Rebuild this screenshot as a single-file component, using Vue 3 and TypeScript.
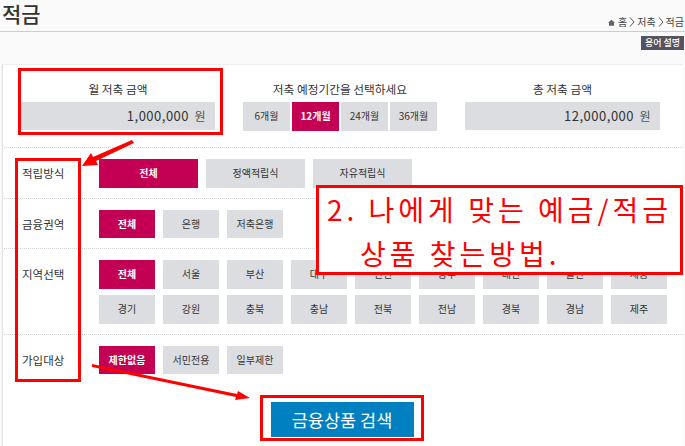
<script setup lang="ts">
const periods = ['6개월', '12개월', '24개월', '36개월']
const methods = ['전체', '정액적립식', '자유적립식']
const areas = ['전체', '은행', '저축은행']
const regions = [
  '전체', '서울', '부산', '대구', '인천', '광주', '대전', '울산', '세종',
  '경기', '강원', '충북', '충남', '전북', '전남', '경북', '경남', '제주',
]
const targets = ['제한없음', '서민전용', '일부제한']
const crumbs = ['홈', '저축', '적금']
</script>

<template>
  <div class="page">
    <header class="head">
      <h1>적금</h1>
      <nav class="crumb">
        <svg class="home" viewBox="0 0 10 10" width="7" height="7">
          <path d="M5 1 L10 5.4 H8.6 V9.5 H1.4 V5.4 H0 Z" fill="#666" />
        </svg>
        <template v-for="(c, i) in crumbs" :key="c">
          <svg v-if="i > 0" class="chev" viewBox="0 0 6 10" width="6" height="10">
            <path d="M1 .5 L5 5 L1 9.5" stroke="#555" stroke-width="1" fill="none" />
          </svg>
          <span>{{ c }}</span>
        </template>
      </nav>
    </header>

    <div class="tools"><button class="term">용어 설명</button></div>

    <section class="card">
      <div class="summary">
        <div class="sum sum-left">
          <p>월 저축 금액</p>
          <div class="amount">1,000,000 <em>원</em></div>
        </div>
        <div class="sum sum-mid">
          <p>저축 예정기간을 선택하세요</p>
          <div class="periods">
            <button v-for="(p, i) in periods" :key="p" class="opt" :class="{ on: i === 1 }">{{ p }}</button>
          </div>
        </div>
        <div class="sum sum-right">
          <p>총 저축 금액</p>
          <div class="amount">12,000,000 <em>원</em></div>
        </div>
      </div>

      <div class="row">
        <div class="label">적립방식</div>
        <div class="opts">
          <button v-for="(m, i) in methods" :key="m" class="opt wide" :class="{ on: i === 0 }">{{ m }}</button>
        </div>
      </div>
      <div class="row">
        <div class="label">금융권역</div>
        <div class="opts">
          <button v-for="(a, i) in areas" :key="a" class="opt" :class="{ on: i === 0 }">{{ a }}</button>
        </div>
      </div>
      <div class="row">
        <div class="label">지역선택</div>
        <div class="opts grid">
          <button v-for="(r, i) in regions" :key="r" class="opt" :class="{ on: i === 0 }">{{ r }}</button>
        </div>
      </div>
      <div class="row last">
        <div class="label">가입대상</div>
        <div class="opts">
          <button v-for="(t, i) in targets" :key="t" class="opt" :class="{ on: i === 0 }">{{ t }}</button>
        </div>
      </div>

      <div class="actions"><button class="search">금융상품 검색</button></div>
    </section>

    <!-- 빨간 주석 표시 -->
    <div class="mark mark-amount"></div>
    <div class="mark mark-labels"></div>
    <div class="mark mark-search"></div>
    <div class="note">
      <div>2. 나에게 맞는 예금/적금</div>
      <div class="note-2">상품 찾는방법.</div>
    </div>
    <svg class="arrows" width="685" height="446" viewBox="0 0 685 446">
      <path d="M132 140 L134 143 L96 161 L98 165 L82 166 L91 153 L93 157 Z" fill="#f00" />
      <path d="M92 364 L92 367 L236 397 L235 400 L250 398 L238 391 L237 394 Z" fill="#f00" />
    </svg>
  </div>
</template>

<style scoped>
.page { position: relative; width: 685px; height: 446px; overflow: hidden; background: #fafafa; color: #333; font-family: "Noto Sans CJK KR", "Noto Sans", sans-serif; }
.head { height: 32px; box-sizing: border-box; display: flex; justify-content: space-between; align-items: flex-end; border-bottom: 1px solid #ccc; padding: 0 1px 0 2px; }
h1 { margin: 0; font-size: 21px; line-height: 25px; padding-top: 1px; font-weight: 500; color: #333; align-self: flex-start; }
.crumb { display: flex; align-items: center; gap: 2px; font-size: 10px; line-height: 14px; padding-bottom: 2px; color: #444; }
.home { margin-right: 1px; }
.tools { height: 32px; display: flex; justify-content: flex-end; padding: 4px 1px 0 0; box-sizing: border-box; }
.term { width: 43px; height: 14px; padding: 0; border: 0; background: #55535f; color: #fff; font: 500 9px/14px "Noto Sans CJK KR", sans-serif; }
.card { margin-left: 2px; width: 681px; height: 382px; background: #fff; border-left: 1px solid #ddd; border-top: 1px solid #eee; box-sizing: border-box; }
.summary { display: flex; height: 83px; border-bottom: 1px dotted #d4d4d4; box-sizing: border-box; padding-top: 13px; margin-left: 1px; }
.sum p { margin: 0 0 2px; height: 22px; font-size: 11.7px; line-height: 22px; text-align: center; color: #333; }
.sum-left { width: 194px; margin-left: 17px; }
.sum-mid { width: 194px; margin-left: 28px; }
.sum-right { width: 195px; margin-left: 28px; }
.amount { height: 28px; background: #dcdde1; text-align: right; padding-right: 9px; font-size: 13px; line-height: 28px; color: #333; letter-spacing: .5px; }
.amount em { font-style: normal; font-size: 12px; color: #555; margin-left: 2px; }
.periods { display: flex; gap: 2px; }
.periods .opt { width: 47px; }
.row { display: flex; padding: 11px 0 10px; border-bottom: 1px dotted #d4d4d4; margin-left: 1px; }
.row.last { border-bottom: 0; }
.label { width: 95px; padding-left: 18px; box-sizing: border-box; font-size: 11.5px; line-height: 28px; color: #333; flex: none; }
.opts { display: flex; gap: 8px; }
.grid { display: grid; grid-template-columns: repeat(9, 56px); gap: 6.5px 8px; }
.opt { width: 56px; height: 28.5px; padding: 0; border: 0; background: #dcdde1; color: #333; font: 400 10px/28px "Noto Sans CJK KR", sans-serif; }
.opt.wide { width: 99px; }
.opt.on { background: #c40054; color: #fff; font-weight: 700; }
.actions { display: flex; justify-content: center; padding-top: 17.5px; margin-left: -2px; }
.search { width: 143px; height: 35px; padding: 0; border: 0; background: #0080c0; color: #fff; font: 400 17.5px/35px "Noto Sans CJK KR", sans-serif; }
.mark { position: absolute; border: 3px solid #f00; box-sizing: border-box; }
.mark-amount { left: 18px; top: 68px; width: 205px; height: 67px; }
.mark-labels { left: 15px; top: 158px; width: 66px; height: 224px; }
.mark-search { left: 260px; top: 395px; width: 164px; height: 46px; }
.note { position: absolute; left: 316px; top: 185px; width: 367px; height: 90px; box-sizing: border-box; border: 3px solid #f00; background: #fff; color: #f00; font-size: 28px; line-height: 42px; font-weight: 400; padding: 0 0 0 8px; white-space: nowrap; letter-spacing: 4px; }
.note-2 { padding-left: 33px; margin-top: 2px; }
.arrows { position: absolute; left: 0; top: 0; pointer-events: none; }
</style>

<style>
html, body { background: #fafafa; }
</style>
